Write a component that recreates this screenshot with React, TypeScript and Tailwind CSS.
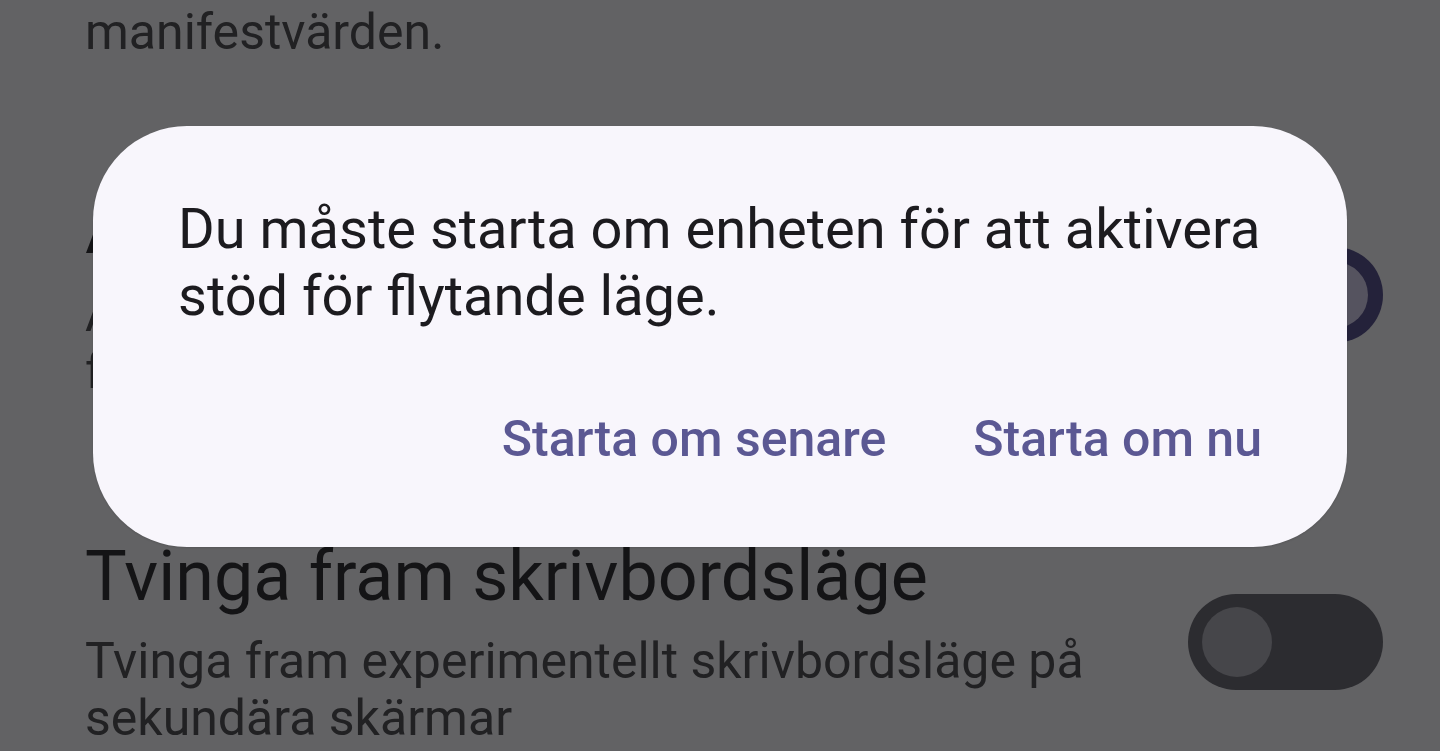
import React from "react";

function Toggle({ on }: { on: boolean }) {
	return (
		<div
			className={`w-[195px] h-[96px] rounded-full flex items-center shrink-0 ${
				on ? "bg-[#24223a] justify-end px-[15px]" : "bg-[#2c2c30] justify-start px-[14px]"
			}`}
		>
			<div
				className={`rounded-full ${
					on ? "w-[66px] h-[66px] bg-[#55535f]" : "w-[70px] h-[70px] bg-[#46464a]"
				}`}
			/>
		</div>
	);
}

function SettingRow({
	title,
	lines,
	on,
}: {
	title: string;
	lines: string[];
	on: boolean;
}) {
	return (
		<div className="flex items-center justify-between gap-8">
			<div className="flex flex-col">
				<p className="text-[70px] leading-[80px] text-[#141416]">{title}</p>
				<div className="mt-[17px] flex flex-col">
					{lines.map((l, i) => (
						<p key={i} className="text-[50px] leading-[57px] text-[#212123]">
							{l}
						</p>
					))}
				</div>
			</div>
			<Toggle on={on} />
		</div>
	);
}

export default function App() {
	return (
		<div
			className="relative w-[1440px] h-[751px] overflow-hidden bg-[#626264]"
			style={{ fontFamily: "Roboto, 'Noto Sans', sans-serif" }}
		>
			<div className="flex flex-col pl-[85px] pr-[57px] pt-[4px]">
				<p className="text-[50px] leading-[57px] text-[#212123]">manifestvärden.</p>
				<div className="mt-[128px]">
					<SettingRow
						title="Aktivera fönster i fritt format"
						lines={["Aktivera stöd för experimentella", "fönster i fritt format."]}
						on={true}
					/>
				</div>
				<div className="mt-[136px]">
					<SettingRow
						title="Tvinga fram skrivbordsläge"
						lines={["Tvinga fram experimentellt skrivbordsläge på", "sekundära skärmar"]}
						on={false}
					/>
				</div>
			</div>

			<div className="absolute left-[93px] top-[126px] w-[1254px] h-[421px] rounded-[94px] bg-[#f8f6fc] shadow-[0_1px_2px_rgba(0,0,0,0.12)] flex flex-col px-[85px]">
				<p className="pt-[70px] text-[56px] leading-[67px] text-[#1c1b1f]">
					Du måste starta om enheten för att aktivera stöd för flytande läge.
				</p>
				<div className="flex justify-end gap-[87px] mt-[81px]">
					<button className="text-[50px] leading-[56px] font-medium text-[#5b5893]">
						Starta om senare
					</button>
					<button className="text-[50px] leading-[56px] font-medium text-[#5b5893]">
						Starta om nu
					</button>
				</div>
			</div>
		</div>
	);
}
